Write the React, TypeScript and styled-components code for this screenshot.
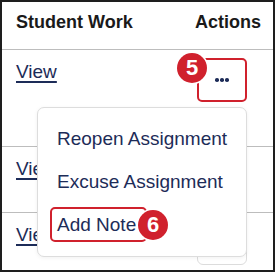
import React from "react";
import styled, { createGlobalStyle, css } from "styled-components";

const GlobalStyle = createGlobalStyle`
  html, body { margin: 0; padding: 0; background: #ffffff; }
  body { font-family: "Liberation Sans", Arial, sans-serif; }
  * { box-sizing: border-box; }
`;

const NAVY = "#1d2c58";
const RED = "#d0212d";

const Frame = styled.div`
  position: relative;
  width: 275px;
  height: 272px;
  border: 2px solid #1e1e1e;
  background: #ffffff;
  overflow: hidden;
  display: flex;
  flex-direction: column;
`;

const HeaderRow = styled.div`
  height: 48px;
  flex: none;
  display: flex;
  justify-content: space-between;
  align-items: flex-start;
  padding: 10px 12px 0 14px;
  border-bottom: 1px solid #bdbdbd;
`;

const HeadCell = styled.div`
  font-size: 18px;
  line-height: 20px;
  font-weight: 700;
  color: #1a1a1a;
`;

const Row = styled.div<{ $h: number; $last?: boolean }>`
  height: ${(p) => p.$h}px;
  flex: none;
  display: flex;
  justify-content: space-between;
  align-items: flex-start;
  padding: 8px 26px 0 14px;
  border-bottom: ${(p) => (p.$last ? "none" : "1px solid #bdbdbd")};
`;

const ViewLink = styled.a`
  margin-top: 3px;
  font-size: 19px;
  line-height: 21px;
  color: ${NAVY};
  text-decoration: underline;
  text-decoration-thickness: 1.5px;
  text-underline-offset: 3px;
  cursor: pointer;
`;

const ActionButton = styled.button<{ $highlighted?: boolean }>`
  position: relative;
  width: 50px;
  height: 44px;
  padding: 0;
  background: #ffffff;
  display: flex;
  align-items: center;
  justify-content: center;
  gap: 1.2px;
  border-radius: 6px;
  border: 1px solid #dcdcdc;
  ${(p) =>
    p.$highlighted &&
    css`
      border: 2px solid ${RED};
      border-radius: 5px;
    `}
`;

const Dot = styled.span`
  width: 3.6px;
  height: 3.6px;
  border-radius: 50%;
  background: ${NAVY};
`;

const Badge = styled.span<{ $place: "corner" | "side" }>`
  position: absolute;
  width: 30px;
  height: 30px;
  border-radius: 50%;
  background: ${RED};
  box-shadow: 0 0 0 1.5px #ffffff;
  color: #ffffff;
  font-family: "Liberation Sans", Arial, sans-serif;
  font-weight: 700;
  font-size: 22px;
  line-height: 30px;
  text-align: center;
  ${(p) =>
    p.$place === "corner"
      ? css`
          left: -22px;
          top: -7px;
        `
      : css`
          right: -23px;
          top: 50%;
          transform: translateY(-50%);
        `}
`;

const Menu = styled.div`
  position: absolute;
  left: 35px;
  top: 105px;
  width: 210px;
  height: 150px;
  background: #ffffff;
  border: 1px solid #dddddd;
  border-radius: 7px;
  box-shadow: 0 1px 4px rgba(0, 0, 0, 0.06);
  padding: 9px 0 0 19px;
  display: flex;
  flex-direction: column;
`;

const MenuItem = styled.div`
  height: 43px;
  display: flex;
  align-items: center;
  font-size: 19px;
  line-height: 21px;
  color: ${NAVY};
  white-space: nowrap;
`;

const HighlightLabel = styled.span`
  position: relative;
  margin-left: -7px;
  height: 35px;
  line-height: 31px;
  padding: 0 9px 0 5px;
  border: 2px solid ${RED};
  border-radius: 5px;
`;

const ActionDots = () => (
  <>
    <Dot />
    <Dot />
    <Dot />
  </>
);

export default function App() {
  return (
    <>
      <GlobalStyle />
      <Frame>
        <HeaderRow>
          <HeadCell>Student Work</HeadCell>
          <HeadCell>Actions</HeadCell>
        </HeaderRow>
        <Row $h={97}>
          <ViewLink>View</ViewLink>
          <ActionButton $highlighted>
            <Badge $place="corner">5</Badge>
            <ActionDots />
          </ActionButton>
        </Row>
        <Row $h={66}>
          <ViewLink>View</ViewLink>
          <ActionButton>
            <ActionDots />
          </ActionButton>
        </Row>
        <Row $h={60} $last>
          <ViewLink>View</ViewLink>
          <ActionButton>
            <ActionDots />
          </ActionButton>
        </Row>
        <Menu>
          <MenuItem>Reopen Assignment</MenuItem>
          <MenuItem>Excuse Assignment</MenuItem>
          <MenuItem>
            <HighlightLabel>
              Add Note
              <Badge $place="side">6</Badge>
            </HighlightLabel>
          </MenuItem>
        </Menu>
      </Frame>
    </>
  );
}
